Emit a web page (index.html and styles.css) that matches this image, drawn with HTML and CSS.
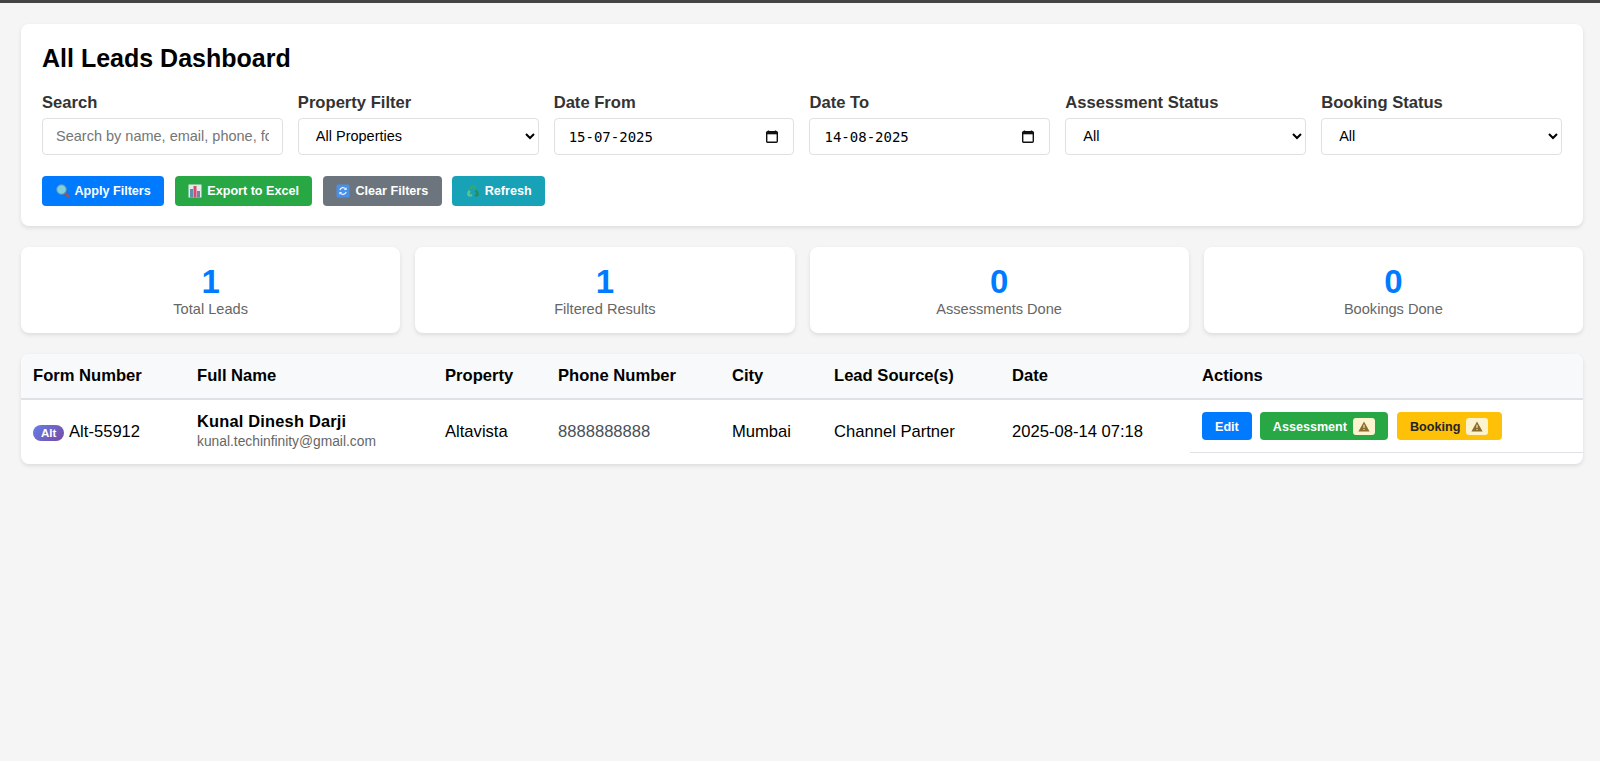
FILE: index.html
```html
<!DOCTYPE html>
<html lang="en">
<head>
<meta charset="utf-8">
<title>All Leads Dashboard</title>
<link rel="stylesheet" href="styles.css">
</head>
<body>
<main class="page">
  <section class="card filters-card">
    <h1 class="title">All Leads Dashboard</h1>
    <div class="filter-grid">
      <div class="field">
        <label class="field-label">Search</label>
        <input class="control search" type="text" placeholder="Search by name, email, phone, form number">
      </div>
      <div class="field">
        <label class="field-label">Property Filter</label>
        <select class="control select"><option>All Properties</option></select>
      </div>
      <div class="field">
        <label class="field-label">Date From</label>
        <div class="control date"><span class="date-text">15-07-2025</span>
          <svg class="cal" viewBox="0 0 12 13" width="12" height="13"><path d="M2.5 0.5v1.5M9.5 0.5v1.5" stroke="#111" stroke-width="1.4" fill="none"/><rect x="0.7" y="1.7" width="10.6" height="10.6" rx="1" fill="none" stroke="#111" stroke-width="1.4"/><rect x="0.7" y="1.7" width="10.6" height="2.6" fill="#111"/></svg>
        </div>
      </div>
      <div class="field">
        <label class="field-label">Date To</label>
        <div class="control date"><span class="date-text">14-08-2025</span>
          <svg class="cal" viewBox="0 0 12 13" width="12" height="13"><path d="M2.5 0.5v1.5M9.5 0.5v1.5" stroke="#111" stroke-width="1.4" fill="none"/><rect x="0.7" y="1.7" width="10.6" height="10.6" rx="1" fill="none" stroke="#111" stroke-width="1.4"/><rect x="0.7" y="1.7" width="10.6" height="2.6" fill="#111"/></svg>
        </div>
      </div>
      <div class="field">
        <label class="field-label">Assessment Status</label>
        <select class="control select"><option>All</option></select>
      </div>
      <div class="field">
        <label class="field-label">Booking Status</label>
        <select class="control select"><option>All</option></select>
      </div>
    </div>
    <div class="btn-row">
      <button class="btn blue">
        <svg class="ico" viewBox="0 0 14 14"><path d="M8.500 8.500l4 4" stroke="#a8504a" stroke-width="2.600" stroke-linecap="round"/><circle cx="5.500" cy="5.500" r="4.800" fill="#7fd0dc"/><circle cx="5.500" cy="5.500" r="4.800" fill="none" stroke="#5a93a8" stroke-width="1"/></svg>Apply Filters</button>
      <button class="btn green">
        <svg class="ico" viewBox="0 0 14 14"><rect x="0.500" y="0.500" width="13" height="13" fill="#e4e9ec"/><rect x="2" y="5" width="3" height="8.500" fill="#5c8fb0"/><rect x="5.500" y="2" width="3" height="11.500" fill="#d84a6e"/><rect x="9" y="7" width="3" height="6.500" fill="#6e8a9a"/></svg>Export to Excel</button>
      <button class="btn gray">
        <svg class="ico" viewBox="0 0 14 14"><rect x="0.500" y="0.500" width="13" height="13" rx="1.500" fill="#4a90e8"/><path d="M3.800 6a3.400 3.400 0 0 1 6-1M10.200 8a3.400 3.400 0 0 1-6 1" stroke="#e8f2ff" stroke-width="1.200" fill="none"/><path d="M10.600 3.200v2.800H7.800zM3.400 10.800V8h2.800z" fill="#e8f2ff"/></svg>Clear Filters</button>
      <button class="btn teal">
        <svg class="ico" viewBox="0 0 14 14"><path d="M5.200 1h3.200l1.900 3.300-2.300 1.300-1.300-2.300-1.400 2.400L3.100 4.400z" fill="#3aa86c"/><path d="M10.800 5.800L13.200 10l-1.500 2.600H8.800v-2.300h1.800L8.900 7z" fill="#2a8a58"/><path d="M2.500 6l2.200 1.300-1.200 3h2.700v2.300H2.400L.8 10z" fill="#5cc48c"/></svg>Refresh</button>
    </div>
  </section>

  <section class="stats">
    <div class="card stat"><div class="stat-num">1</div><div class="stat-label">Total Leads</div></div>
    <div class="card stat"><div class="stat-num">1</div><div class="stat-label">Filtered Results</div></div>
    <div class="card stat"><div class="stat-num">0</div><div class="stat-label">Assessments Done</div></div>
    <div class="card stat"><div class="stat-num">0</div><div class="stat-label">Bookings Done</div></div>
  </section>

  <section class="card table-card">
    <table class="leads">
      <colgroup>
        <col class="c1"><col class="c2"><col class="c3"><col class="c4"><col class="c5"><col class="c6"><col class="c7"><col class="c8">
      </colgroup>
      <thead>
        <tr>
          <th>Form Number</th><th>Full Name</th><th>Property</th><th>Phone Number</th><th>City</th><th>Lead Source(s)</th><th>Date</th><th>Actions</th>
        </tr>
      </thead>
      <tbody>
        <tr>
          <td><span class="pill">Alt</span> Alt-55912</td>
          <td><div class="lead-name">Kunal Dinesh Darji</div><div class="lead-email">kunal.techinfinity@gmail.com</div></td>
          <td>Altavista</td>
          <td class="phone">8888888888</td>
          <td>Mumbai</td>
          <td>Channel Partner</td>
          <td>2025-08-14 07:18</td>
          <td class="actions">
            <button class="act blue">Edit</button>
            <button class="act green">Assessment <span class="warn"><svg class="warn-ico" viewBox="0 0 12 11"><path d="M6 0.600L11.600 10.400H0.400z" fill="#8a6d2e"/><path d="M6 3.800v3.200M6 8v1" stroke="#f5e3b0" stroke-width="1.200"/></svg></span></button>
            <button class="act yellow">Booking <span class="warn"><svg class="warn-ico" viewBox="0 0 12 11"><path d="M6 0.600L11.600 10.400H0.400z" fill="#8a6d2e"/><path d="M6 3.800v3.200M6 8v1" stroke="#f5e3b0" stroke-width="1.200"/></svg></span></button>
          </td>
        </tr>
      </tbody>
    </table>
  </section>
</main>
</body>
</html>
```

FILE: styles.css
```css
* { box-sizing: border-box; }
html, body { height: 100%; }
body {
  margin: 0;
  background: #f5f5f5;
  font-family: "Liberation Sans", Arial, sans-serif;
  color: #000;
  border-top: 3px solid #444;
  overflow: hidden;
}
.page { padding: 21px 17px 0 21px; }
.card {
  background: #fff;
  border-radius: 8px;
  box-shadow: 0 2px 4px rgba(0, 0, 0, 0.1);
}
.filters-card { padding: 20px 21px; height: 202px; margin-bottom: 21px; }
.title { margin: 0 0 22px; font-size: 25px; line-height: 28px; font-weight: 700; }
.filter-grid { display: grid; grid-template-columns: repeat(6, 1fr); column-gap: 15px; }
.field { display: flex; flex-direction: column; min-width: 0; }
.field-label { font-size: 16.6px; line-height: 18px; font-weight: 700; color: #333; margin-bottom: 6px; }
.control {
  width: 100%;
  height: 37px;
  border: 1px solid #e0e0e0;
  border-radius: 4px;
  background: #fff;
  font-family: "Liberation Sans", Arial, sans-serif;
  font-size: 14.5px;
  color: #000;
}
.search { padding: 0 13px 2px; }
.search::placeholder { color: #757575; }
.select { padding: 0 13px 2px; }
.date { display: flex; align-items: center; justify-content: space-between; padding: 0 15px 0 14px; }
.date-text { font-family: "DejaVu Sans Mono", monospace; font-size: 14px; }
.cal { display: block; }
.btn-row { display: flex; gap: 10.5px; margin-top: 21px; }
.btn {
  height: 30px;
  border: 0;
  border-radius: 4px;
  padding: 0 13.5px;
  display: flex;
  align-items: center;
  gap: 5px;
  font-family: "Liberation Sans", Arial, sans-serif;
  font-size: 12.6px;
  font-weight: 700;
  color: #fff;
}
.ico { width: 14px; height: 14px; display: block; flex: none; }
.blue { background: #007bff; }
.green { background: #28a745; }
.gray { background: #6c757d; }
.teal { background: #17a2b8; }
.yellow { background: #ffc107; }
.stats { display: grid; grid-template-columns: repeat(4, 1fr); gap: 15px; margin-bottom: 21px; }
.stat { height: 86px; padding: 16px 15px 0; text-align: center; }
.stat-num { font-size: 33px; line-height: 37px; font-weight: 700; color: #007bff; }
.stat-label { font-size: 14.6px; line-height: 17px; padding-top: 1px; color: #666; }
.table-card { overflow: hidden; height: 110px; }
.leads { width: 100%; border-collapse: collapse; table-layout: fixed; }
.c1 { width: 164px; } .c2 { width: 248px; } .c3 { width: 113px; } .c4 { width: 174px; }
.c5 { width: 102px; } .c6 { width: 178px; } .c7 { width: 190px; }
.leads th {
  background: #f8f9fa;
  height: 45px;
  padding: 0 12px;
  border-bottom: 2px solid #dee2e6;
  text-align: left;
  font-size: 16.6px;
  font-weight: 700;
}
.leads td {
  padding: 12px;
  font-size: 16.6px;
  height: 65px;
  white-space: nowrap;
  border-bottom: 1px solid #e9e9e9;
}
.pill {
  display: inline-block;
  background: linear-gradient(135deg, #667eea, #764ba2);
  color: #fff;
  font-size: 11.5px;
  font-weight: 700;
  line-height: 16px;
  padding: 0 8px;
  margin-right: 1px;
  border-radius: 10px;
}
.lead-name { font-weight: 700; font-size: 16.4px; line-height: 18px; letter-spacing: 0.2px; margin-top: -1px; }
.lead-email { font-size: 13.8px; line-height: 16px; color: #666; margin-top: 4px; }
.phone { color: #495057; }
.leads td.actions {
  display: flex;
  gap: 8px;
  height: auto;
  padding: 12px;
  border-bottom: 1px solid #dee2e6;
}
.act {
  height: 28px;
  border: 0;
  border-radius: 4px;
  padding: 1px 13px 0;
  display: flex;
  align-items: center;
  gap: 6px;
  font-family: "Liberation Sans", Arial, sans-serif;
  font-size: 12.6px;
  font-weight: 700;
  color: #fff;
}
.act.yellow { color: #212529; padding-right: 14px; margin-left: 1px; }
.warn {
  display: flex;
  align-items: center;
  justify-content: center;
  width: 22px;
  height: 17px;
  border-radius: 3px;
  background: #fdf3cf;
}
.warn-ico { width: 12px; height: 11px; display: block; }
```
